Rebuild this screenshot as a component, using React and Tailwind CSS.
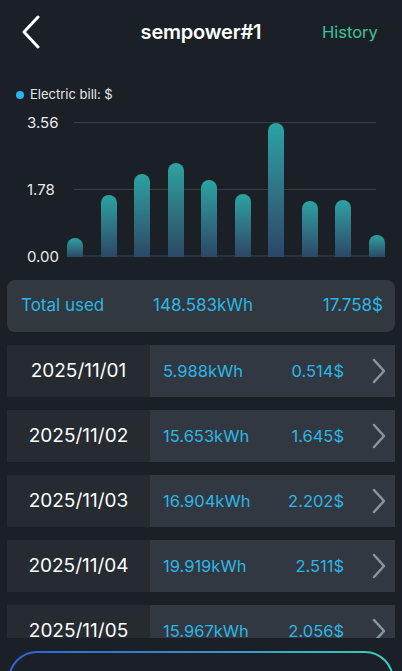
import React from "react";

const bars = [0.514, 1.645, 2.202, 2.511, 2.056, 1.67, 3.56, 1.48, 1.51, 0.58];
const rows = [
  ["2025/11/01", "5.988kWh", "0.514$"],
  ["2025/11/02", "15.653kWh", "1.645$"],
  ["2025/11/03", "16.904kWh", "2.202$"],
  ["2025/11/04", "19.919kWh", "2.511$"],
  ["2025/11/05", "15.967kWh", "2.056$"],
  ["2025/11/06", "14.215kWh", "1.670$"],
];

const ticks = [
  ["3.56", "top-[15px]"],
  ["1.78", "top-[82px]"],
  ["0.00", "top-[149px]"],
];

export default function App() {
  return (
    <div className="w-[402px] h-[671px] bg-[#1b2026] overflow-hidden flex flex-col" style={{ fontFamily: "Inter, 'Noto Sans', sans-serif" }}>
      {/* header */}
      <div className="h-[64px] flex items-center px-[20px] shrink-0">
        <div className="w-[60px]">
          <svg width="22" height="34" viewBox="0 0 22 34" fill="none" stroke="white" strokeWidth="3" strokeLinecap="round" strokeLinejoin="round">
            <path d="M18 2 L4 17 L18 32" />
          </svg>
        </div>
        <div className="flex-1 text-center text-white font-semibold text-[20px] tracking-[-0.2px]">sempower#1</div>
        <div className="w-[60px] text-right text-[#3fc09f] text-[16.5px] pr-[5px]">History</div>
      </div>

      {/* chart */}
      <div className="px-[15px] pt-[23px] shrink-0">
        <div className="flex items-center gap-[6px] h-[16px]">
          <span className="w-[8px] h-[8px] rounded-full bg-[#2ab4f0] ml-[1px]" />
          <span className="text-[#e5e7ea] text-[13px]">Electric bill: $</span>
        </div>
        <div className="relative h-[150px] mt-[4px]">
          {ticks.map(([t, top]) => (
            <div key={t} className={`absolute left-0 right-[11px] ${top} h-0`}>
              <span className="absolute left-[12px] top-0 -translate-y-1/2 text-[#e8eaec] text-[15px] leading-none">{t}</span>
              <div className="absolute left-[59px] right-0 top-0 h-px bg-[#373d45]" />
            </div>
          ))}
          <div className="absolute left-[52px] right-[2px] top-[148px] h-[2px] bg-[#263242]" />
          <div className="absolute left-[52px] bottom-0 h-[135px] flex items-end gap-[17.5px]">
            {bars.map((v, i) => (
              <div
                key={i}
                className="w-[16px] rounded-t-full bg-gradient-to-b from-[#2aa3a3] to-[#2b4866]"
                style={{ height: `${(v / 3.56) * 134}px` }}
              />
            ))}
          </div>
        </div>
      </div>

      {/* total */}
      <div className="mx-[7px] mt-[23px] h-[52px] rounded-[8px] bg-[#313840] flex items-center pl-[14px] pr-[12px] text-[#2cb6e3] text-[17px] shrink-0">
        <span className="w-[132px]">Total used</span>
        <span className="flex-1">148.583kWh</span>
        <span>17.758$</span>
      </div>

      {/* list */}
      <div className="h-[293px] shrink-0 overflow-hidden mt-[13px] mx-[7px] flex flex-col gap-[13px]">
        {rows.map(([d, k, c]) => (
          <div key={d} className="h-[52px] shrink-0 flex">
            <div className="w-[143px] bg-[#262b32] flex items-center justify-center text-white text-[19px]">{d}</div>
            <div className="flex-1 bg-[#323841] flex items-center pl-[13px] pr-[9px] text-[#2cb6e3] text-[16.5px]">
              <span className="flex-1">{k}</span>
              <span className="mr-[28px]">{c}</span>
              <svg width="14" height="26" viewBox="0 0 14 26" fill="none" stroke="#8a95a2" strokeWidth="2.5" strokeLinecap="round" strokeLinejoin="round">
                <path d="M2 2 L12 13 L2 24" />
              </svg>
            </div>
          </div>
        ))}
      </div>

      {/* bottom button */}
      <div className="shrink-0 pt-[13px] px-[8px]">
        <div className="h-[58px] rounded-[32px] p-[2px] bg-gradient-to-r from-[#2f62d8] via-[#3a8ad0] to-[#3cd0c0]">
          <div className="h-full rounded-[30px] bg-[#1b2026] flex items-start justify-center pt-[16px] text-white text-[17px] font-semibold">
            Export
          </div>
        </div>
      </div>
    </div>
  );
}
